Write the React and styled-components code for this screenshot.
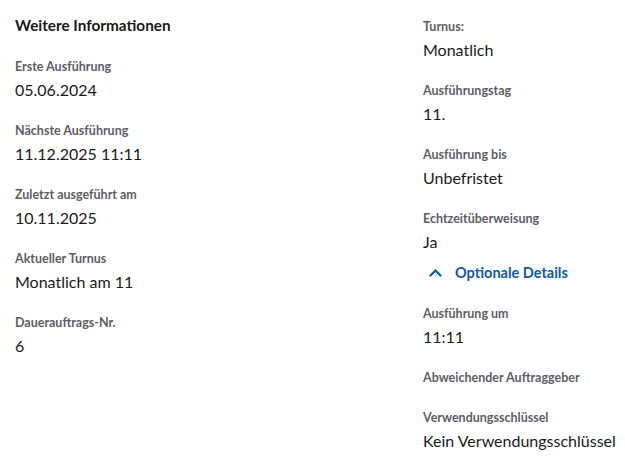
import React from "react";
import styled, { createGlobalStyle } from "styled-components";

const Global = createGlobalStyle`
  html, body { margin: 0; padding: 0; background: #fff; }
  body { font-family: Lato, "Noto Sans", sans-serif; color: #1a1a1a; }
`;

const Page = styled.div`
  display: grid;
  grid-template-columns: 408px 1fr;
  padding: 18px 0 0 15px;
  width: 625px;
  box-sizing: border-box;
`;

const Column = styled.div`
  display: flex;
  flex-direction: column;
`;

const RightColumn = styled(Column)`
  padding-top: 0.5px;
`;

const Title = styled.h2`
  margin: -2px 0 25px;
  font-size: 15.3px;
  line-height: 18px;
  font-weight: 700;
  color: #1a1a1a;
`;

const Item = styled.div`
  display: flex;
  flex-direction: column;
  gap: 3px;
  margin-bottom: ${(p) => (p.$empty ? 24 : 21)}px;
`;

const Label = styled.div`
  font-size: 12.5px;
  line-height: 16px;
  font-weight: 700;
  color: #5d5d66;
`;

const Value = styled.div`
  font-size: 16px;
  line-height: 24px;
  color: #1a1a1a;
`;

const Toggle = styled.button`
  display: flex;
  align-items: center;
  gap: 13px;
  margin: -14px 0 21px;
  padding: 0 0 0 6px;
  border: 0;
  background: none;
  font-family: inherit;
  font-size: 14.5px;
  line-height: 24px;
  font-weight: 700;
  color: #0d5aa7;
  cursor: pointer;
  text-align: left;
`;

const Chevron = () => (
  <svg width="13" height="9" viewBox="0 0 13 9" fill="none">
    <path d="M1.5 7.5 L6.5 2.5 L11.5 7.5" stroke="#0d5aa7" strokeWidth="2.2" strokeLinecap="round" strokeLinejoin="round" />
  </svg>
);

const Field = ({ label, value }) => (
  <Item $empty={value == null}>
    <Label>{label}</Label>
    {value != null && <Value>{value}</Value>}
  </Item>
);

export default function App() {
  return (
    <>
      <Global />
      <Page>
        <Column>
          <Title>Weitere Informationen</Title>
          <Field label="Erste Ausführung" value="05.06.2024" />
          <Field label="Nächste Ausführung" value="11.12.2025 11:11" />
          <Field label="Zuletzt ausgeführt am" value="10.11.2025" />
          <Field label="Aktueller Turnus" value="Monatlich am 11" />
          <Field label="Dauerauftrags-Nr." value="6" />
        </Column>
        <RightColumn>
          <Field label="Turnus:" value="Monatlich" />
          <Field label="Ausführungstag" value="11." />
          <Field label="Ausführung bis" value="Unbefristet" />
          <Field label="Echtzeitüberweisung" value="Ja" />
          <Toggle>
            <Chevron />
            Optionale Details
          </Toggle>
          <Field label="Ausführung um" value="11:11" />
          <Field label="Abweichender Auftraggeber" />
          <Field label="Verwendungsschlüssel" value="Kein Verwendungsschlüssel" />
        </RightColumn>
      </Page>
    </>
  );
}
